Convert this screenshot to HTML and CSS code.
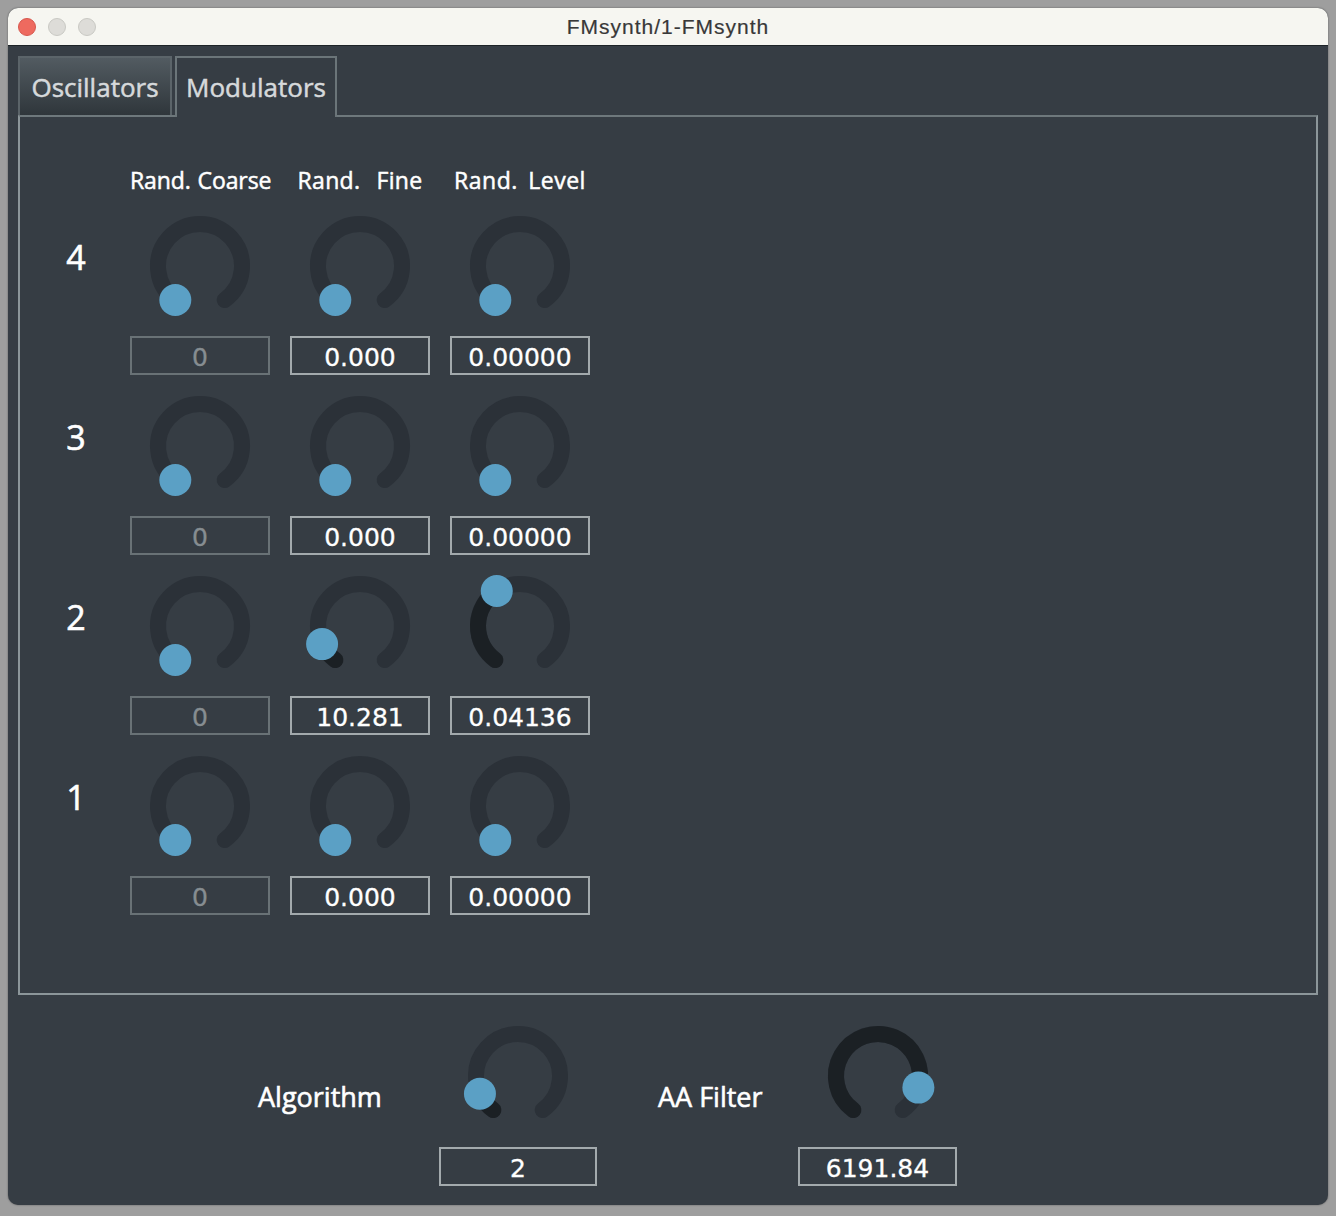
FILE: index.html
```html
<!DOCTYPE html>
<html>
<head>
<meta charset="utf-8">
<title>FMsynth/1-FMsynth</title>
<link rel="stylesheet" href="styles.css">
</head>
<body>
<div class="window">
  <div class="titlebar">
    <div class="lights">
      <span class="light red"></span>
      <span class="light"></span>
      <span class="light"></span>
    </div>
    <div class="title">FMsynth/1-FMsynth</div>
    <div></div>
  </div>
  <div class="content">
    <div class="tabs">
      <div class="tab osc">Oscillators</div>
      <div class="tab active">Modulators</div>
    </div>
    <div class="panel">
      <div class="grid">
        <div></div>
        <div class="head">Rand. Coarse</div>
        <div class="head wide">Rand. Fine</div>
        <div class="head mid">Rand. Level</div>

        <div class="rowlabel">4</div>
        <div class="cell">
          <svg class="knob" viewBox="0 0 100 100"><path class="track" d="M25.31 83.98A42 42 0 1 1 74.69 83.98"/><circle class="dot" cx="25.31" cy="83.98" r="16"/></svg>
          <div class="box dim">0</div>
        </div>
        <div class="cell">
          <svg class="knob" viewBox="0 0 100 100"><path class="track" d="M25.31 83.98A42 42 0 1 1 74.69 83.98"/><circle class="dot" cx="25.31" cy="83.98" r="16"/></svg>
          <div class="box">0.000</div>
        </div>
        <div class="cell">
          <svg class="knob" viewBox="0 0 100 100"><path class="track" d="M25.31 83.98A42 42 0 1 1 74.69 83.98"/><circle class="dot" cx="25.31" cy="83.98" r="16"/></svg>
          <div class="box">0.00000</div>
        </div>

        <div class="rowlabel">3</div>
        <div class="cell">
          <svg class="knob" viewBox="0 0 100 100"><path class="track" d="M25.31 83.98A42 42 0 1 1 74.69 83.98"/><circle class="dot" cx="25.31" cy="83.98" r="16"/></svg>
          <div class="box dim">0</div>
        </div>
        <div class="cell">
          <svg class="knob" viewBox="0 0 100 100"><path class="track" d="M25.31 83.98A42 42 0 1 1 74.69 83.98"/><circle class="dot" cx="25.31" cy="83.98" r="16"/></svg>
          <div class="box">0.000</div>
        </div>
        <div class="cell">
          <svg class="knob" viewBox="0 0 100 100"><path class="track" d="M25.31 83.98A42 42 0 1 1 74.69 83.98"/><circle class="dot" cx="25.31" cy="83.98" r="16"/></svg>
          <div class="box">0.00000</div>
        </div>

        <div class="rowlabel">2</div>
        <div class="cell">
          <svg class="knob" viewBox="0 0 100 100"><path class="track" d="M25.31 83.98A42 42 0 1 1 74.69 83.98"/><circle class="dot" cx="25.31" cy="83.98" r="16"/></svg>
          <div class="box dim">0</div>
        </div>
        <div class="cell">
          <svg class="knob" viewBox="0 0 100 100"><path class="track" d="M25.31 83.98A42 42 0 1 1 74.69 83.98"/><path class="active" d="M25.31 83.98A42 42 0 0 1 12.09 68.08"/><circle class="dot" cx="12.09" cy="68.08" r="16"/></svg>
          <div class="box">10.281</div>
        </div>
        <div class="cell">
          <svg class="knob" viewBox="0 0 100 100"><path class="track" d="M25.31 83.98A42 42 0 1 1 74.69 83.98"/><path class="active" d="M25.31 83.98A42 42 0 0 1 26.76 15.02"/><circle class="dot" cx="26.76" cy="15.02" r="16"/></svg>
          <div class="box">0.04136</div>
        </div>

        <div class="rowlabel">1</div>
        <div class="cell">
          <svg class="knob" viewBox="0 0 100 100"><path class="track" d="M25.31 83.98A42 42 0 1 1 74.69 83.98"/><circle class="dot" cx="25.31" cy="83.98" r="16"/></svg>
          <div class="box dim">0</div>
        </div>
        <div class="cell">
          <svg class="knob" viewBox="0 0 100 100"><path class="track" d="M25.31 83.98A42 42 0 1 1 74.69 83.98"/><circle class="dot" cx="25.31" cy="83.98" r="16"/></svg>
          <div class="box">0.000</div>
        </div>
        <div class="cell">
          <svg class="knob" viewBox="0 0 100 100"><path class="track" d="M25.31 83.98A42 42 0 1 1 74.69 83.98"/><circle class="dot" cx="25.31" cy="83.98" r="16"/></svg>
          <div class="box">0.00000</div>
        </div>
      </div>
    </div>
    <div class="bottom">
      <div class="blabel">Algorithm</div>
      <div class="bgroup">
        <svg class="knob" viewBox="0 0 100 100"><path class="track" d="M25.31 83.98A42 42 0 1 1 74.69 83.98"/><path class="active" d="M25.31 83.98A42 42 0 0 1 11.94 67.75"/><circle class="dot" cx="11.94" cy="67.75" r="16"/></svg>
        <div class="box">2</div>
      </div>
      <div class="blabel aa">AA Filter</div>
      <div class="bgroup">
        <svg class="knob" viewBox="0 0 100 100"><path class="track" d="M25.31 83.98A42 42 0 1 1 74.69 83.98"/><path class="active" d="M25.31 83.98A42 42 0 1 1 90.37 61.58"/><circle class="dot" cx="90.37" cy="61.58" r="16"/></svg>
        <div class="box">6191.84</div>
      </div>
    </div>
  </div>
</div>
</body>
</html>
```
FILE: styles.css
```css
html, body {
  margin: 0;
  padding: 0;
}
body {
  background: #9e9e9e;
  padding: 8px;
  height: 1216px;
  box-sizing: border-box;
  font-family: "Open Sans", "DejaVu Sans", sans-serif;
}
.window {
  width: 1320px;
  height: 1197px;
  border-radius: 10px;
  overflow: hidden;
  display: flex;
  flex-direction: column;
  background: #363d44;
  box-shadow: 0 0 2px rgba(0, 0, 0, 0.45);
}
.titlebar {
  height: 37px;
  flex: none;
  border-bottom: 1px solid #1d2327;
  background: #f6f6f1;
  display: grid;
  grid-template-columns: 1fr auto 1fr;
  align-items: center;
}
.lights {
  display: flex;
  gap: 12px;
  padding-left: 10px;
}
.light {
  width: 18px;
  height: 18px;
  border-radius: 50%;
  box-sizing: border-box;
  background: #dddcd8;
  border: 1px solid #c8c8c3;
}
.light.red {
  background: #ee6a5f;
  border-color: #d6574d;
}
.title {
  font-family: "Liberation Sans", Arial, sans-serif;
  font-size: 21px;
  letter-spacing: 1px;
  color: #383838;
  -webkit-text-stroke: 0.2px #383838;
}
.content {
  flex: 1;
  padding: 10px 10px 0;
}
.tabs {
  display: flex;
  gap: 3px;
  height: 59px;
  align-items: flex-start;
}
.tab {
  box-sizing: border-box;
  height: 59px;
  display: flex;
  align-items: center;
  justify-content: center;
  font-size: 26px;
  color: #d6d9db;
  -webkit-text-stroke: 0.5px #d6d9db;
}
.tab.osc {
  width: 154px;
  border: 2px solid #5b6469;
  border-bottom: none;
  background: linear-gradient(#525b61, #2f363b);
}
.tab.active {
  width: 162px;
  height: 61px;
  border: 2px solid #6b7579;
  border-bottom: none;
  background: #363d44;
  position: relative;
  z-index: 1;
  padding-bottom: 2px;
}
.panel {
  box-sizing: border-box;
  height: 880px;
  border: 2px solid #8c969a;
  border-top-color: #6e787c;
}
.grid {
  display: grid;
  grid-template-columns: 90px repeat(3, 140px);
  column-gap: 20px;
  row-gap: 21px;
  padding-top: 48px;
}
.head {
  height: 30px;
  line-height: 30px;
  text-align: center;
  color: #ffffff;
  font-size: 23px;
  white-space: nowrap;
  letter-spacing: -0.1px;
  word-spacing: 1px;
  -webkit-text-stroke: 0.5px #ffffff;
}
.head.wide {
  word-spacing: 10px;
  letter-spacing: 0.3px;
}
.head.mid {
  letter-spacing: 0.5px;
  word-spacing: 4px;
}
.rowlabel {
  padding-left: 22px;
  margin-top: 21px;
  height: 40px;
  line-height: 40px;
  text-align: center;
  color: #ffffff;
  font-size: 34px;
  -webkit-text-stroke: 0.6px #ffffff;
}
.cell, .bgroup {
  display: flex;
  flex-direction: column;
  align-items: center;
  gap: 20px;
}
.bgroup {
  gap: 21px;
}
.knob {
  width: 100px;
  height: 100px;
  overflow: visible;
  display: block;
}
.track, .active {
  fill: none;
  stroke-width: 16;
  stroke-linecap: round;
}
.track {
  stroke: #2b3138;
}
.active {
  stroke: #1b2024;
}
.dot {
  fill: #5ba0c5;
}
.box {
  box-sizing: border-box;
  width: 100%;
  height: 39px;
  padding-top: 3px;
  border: 2px solid #a3aaad;
  display: flex;
  align-items: center;
  justify-content: center;
  font-family: "DejaVu Sans", sans-serif;
  font-size: 25px;
  color: #ffffff;
  -webkit-text-stroke: 0.3px #ffffff;
}
.box.dim {
  border-color: #697276;
  color: #868d91;
  -webkit-text-stroke: 0.3px #868d91;
}
.bottom {
  display: grid;
  grid-template-columns: 181px 158px 201px 159px;
  padding-top: 31px;
  padding-left: 240px;
}
.blabel {
  margin-top: 56px;
  height: 30px;
  line-height: 30px;
  font-size: 27px;
  color: #ffffff;
  white-space: nowrap;
  -webkit-text-stroke: 0.6px #ffffff;
}
.blabel.aa {
  padding-left: 61px;
}
```
